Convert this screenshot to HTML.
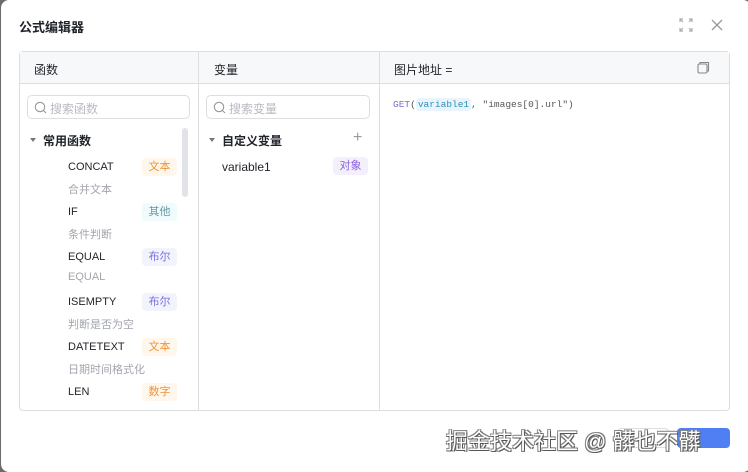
<!DOCTYPE html>
<html><head><meta charset="utf-8"><style>
*{margin:0;padding:0;box-sizing:border-box}
body{width:748px;height:472px;background:#6b6b6b;font-family:"Liberation Sans","Noto Sans CJK SC",sans-serif;position:relative;overflow:hidden}
.dlg{position:absolute;left:1px;top:0;width:750px;height:472px;background:#fff;border-radius:8px}
.abs{position:absolute}
.title{left:18px;top:17px;font-size:13px;color:#1f2329;font-weight:bold}
.box{left:18px;top:51px;width:711px;height:360px;border:1px solid #dcdee2;border-radius:4px}
.hdr{left:0;top:0;width:709px;height:32px;background:#f7f8fa;border-bottom:1px solid #dcdee2}
.vl{top:0;width:1px;height:358px;background:#dcdee2}
.h{font-size:12px;color:#1f2329;top:9px}
.search{height:24px;border:1px solid #dcdee2;border-radius:5px;top:43px;font-size:12px;color:#b7bac0;padding:4px 0 0 22px}
.search svg{position:absolute;left:6px;top:5px}
.fn{font-size:11px;color:#1f2329;left:48px}
.desc{font-size:11px;color:#a2a6ad;left:48px}
.tag{left:122px;width:35px;height:18px;border-radius:4px;font-size:11px;text-align:center;line-height:18px}
.or{background:#fff7ec;color:#f0923a}.cy{background:#effbfc;color:#6a9aa0}.pu{background:#f2f3fd;color:#7373df}
.grp{font-size:12px;font-weight:bold;color:#1f2329}
.tri{width:0;height:0;border-left:3.5px solid transparent;border-right:3.5px solid transparent;border-top:4px solid #777}
</style></head><body>
<div class="dlg">
<div class="abs title">公式编辑器</div>
<svg class="abs" style="left:678px;top:18px" width="14" height="14" viewBox="0 0 14 14" fill="none" stroke="#aaa" stroke-width="1.2"><path d="M1 4V1h3M10 1h3v3M13 10v3h-3M4 13H1v-3M1 1l3 3M13 1l-3 3M13 13l-3-3M1 13l3-3"/></svg>
<svg class="abs" style="left:710px;top:19px" width="12" height="12" viewBox="0 0 12 12" stroke="#999" stroke-width="1.3"><path d="M1 1l10 10M11 1L1 11"/></svg>
<div class="abs box">
 <div class="abs hdr"></div>
 <div class="abs vl" style="left:178px"></div>
 <div class="abs vl" style="left:359px"></div>
 <div class="abs h" style="left:14px">函数</div>
 <div class="abs h" style="left:194px">变量</div>
 <div class="abs h" style="left:374px">图片地址 =</div>
 <svg class="abs" style="left:677px;top:9px" width="13" height="13" viewBox="0 0 13 13" fill="none" stroke="#888" stroke-width="1.1"><rect x="1" y="3" width="9" height="9" rx="1.5"/><path d="M3 3V1.5h8.5V10H10"/></svg>
 <div class="abs search" style="left:7px;width:163px"><svg width="13" height="13" viewBox="0 0 13 13" fill="none" stroke="#999" stroke-width="1.1"><circle cx="6" cy="6" r="4.7"/><path d="M9.5 9.5l2.5 2.5"/></svg>搜索函数</div>
 <div class="abs search" style="left:186px;width:164px"><svg width="13" height="13" viewBox="0 0 13 13" fill="none" stroke="#999" stroke-width="1.1"><circle cx="6" cy="6" r="4.7"/><path d="M9.5 9.5l2.5 2.5"/></svg>搜索变量</div>
 <div class="abs tri" style="left:10px;top:86px"></div>
 <div class="abs grp" style="left:23px;top:80px">常用函数</div>
 <div class="abs" style="left:162px;top:76px;width:6px;height:69px;background:#e2e3e6;border-radius:3px"></div>
 <div class="abs fn" style="top:109px">CONCAT</div><div class="abs tag or" style="top:106px">文本</div>
 <div class="abs desc" style="top:129px">合并文本</div>
 <div class="abs fn" style="top:154px">IF</div><div class="abs tag cy" style="top:151px">其他</div>
 <div class="abs desc" style="top:174px">条件判断</div>
 <div class="abs fn" style="top:199px">EQUAL</div><div class="abs tag pu" style="top:196px">布尔</div>
 <div class="abs desc" style="top:219px">EQUAL</div>
 <div class="abs fn" style="top:244px">ISEMPTY</div><div class="abs tag pu" style="top:241px">布尔</div>
 <div class="abs desc" style="top:264px">判断是否为空</div>
 <div class="abs fn" style="top:289px">DATETEXT</div><div class="abs tag or" style="top:286px">文本</div>
 <div class="abs desc" style="top:309px">日期时间格式化</div>
 <div class="abs fn" style="top:334px">LEN</div><div class="abs tag or" style="top:331px">数字</div>
 <div class="abs tri" style="left:189px;top:86px"></div>
 <div class="abs grp" style="left:202px;top:80px">自定义变量</div>
 <div class="abs" style="left:333px;top:77px;font-size:16px;color:#999">+</div>
 <div class="abs" style="left:202px;top:108px;font-size:12px;color:#1f2329">variable1</div>
 <div class="abs tag pu" style="left:313px;top:105px;color:#8a5fe0;background:#f3effd">对象</div>
 <div class="abs" style="left:373px;top:47px;font-family:'Liberation Mono',monospace;font-size:9.5px;color:#555;white-space:pre"><span style="color:#7b6fd0">GET</span>(<span style="background:#eaf5fb;color:#2a8fbf;padding:1px 2px;border-radius:3px">variable1</span>, "images[0].url")</div>
</div>
<div class="abs" style="left:616px;top:428px;width:52px;height:20px;border:1px solid #dcdee2;border-radius:4px;background:#fff"></div>
<div class="abs" style="left:676px;top:428px;width:53px;height:20px;border-radius:4px;background:#4f7ff2"></div>
<div class="abs" style="left:445px;top:424px;font-size:22px;color:#fff;text-shadow:1px 1px 0 #555,-1px -1px 0 #888,1px -1px 0 #777,-1px 1px 0 #777;white-space:nowrap">掘金技术社区 @ 髒也不髒</div>
</div>
</body></html>
